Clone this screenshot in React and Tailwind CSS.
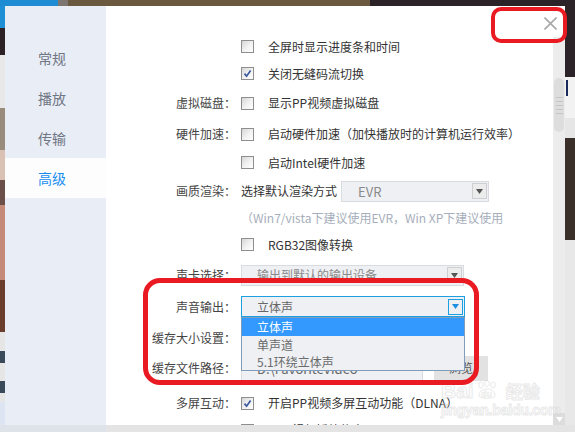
import React from "react";

// small checkbox like the old PPTV settings dialog
function Check({ on }) {
  return (
    <span className="w-[13px] h-[13px] shrink-0 border border-[#8e8e8e] bg-linear-to-br from-[#d6d6d6] via-[#f1f1f1] to-white flex items-center justify-center">
      {on && (
        <svg width="9" height="9" viewBox="0 0 9 9">
          <path d="M1.5 4.6 L3.6 7.2 L7.6 1.4" fill="none" stroke="#3a5a9f" strokeWidth="1.7" />
        </svg>
      )}
    </span>
  );
}

function Arrow({ active }) {
  return (
    <span
      className={`w-[15px] h-[16px] flex items-center justify-center border ${
        active ? "border-[#1ca0e2] bg-[#eef0f4]" : "border-[#cdcfd3] bg-[#ececec]"
      }`}
    >
      <svg width="7" height="5" viewBox="0 0 7 5">
        <path d="M0 0 H7 L3.5 5 Z" fill={active ? "#1c8fe0" : "#555"} />
      </svg>
    </span>
  );
}

function Row({ h, label, children }) {
  return (
    <div className={`flex items-center shrink-0 ${h}`}>
      <div className="w-[130px] shrink-0 text-right text-[#444]">{label}</div>
      <div className="ml-[5px] flex items-center whitespace-nowrap">{children}</div>
    </div>
  );
}

export default function App() {
  return (
    <div className="relative w-[575px] h-[432px] overflow-hidden flex flex-col bg-[#e6e6e6] font-['Noto_Sans_CJK_SC',sans-serif] text-[12px] leading-none">
      {/* background strip on top */}
      <div className="h-[6px] flex shrink-0">
        <div className="w-[58px] bg-[#1d8cd4]" />
        <div className="w-[10px] bg-[#7c7570]" />
        <div className="w-[302px] bg-[#6a583f]" />
        <div className="flex-1 bg-[#2b2327]" />
      </div>

      <div className="h-[419px] flex shrink-0">
        {/* background on the left */}
        <div className="w-[5px] flex flex-col">
          <div className="h-[22px] bg-[#1f8fd6]" />
          <div className="h-[27px] bg-[#2c2226]" />
          <div className="h-[53px] bg-[#e8e8e8]" />
          <div className="h-[42px] bg-[#9a8c7c]" />
          <div className="h-[30px] bg-[#d9c2b4]" />
          <div className="h-[25px] bg-[#6a5048]" />
          <div className="h-[75px] bg-[#c58a78]" />
          <div className="h-[52px] bg-[#6b3d2c]" />
          <div className="h-[19px] bg-[#e6e6e6]" />
          <div className="h-[12px] bg-[#3b4a5a]" />
          <div className="h-[18px] bg-[#e6e6e6]" />
          <div className="h-[12px] bg-[#3b4a5a]" />
          <div className="h-[9px] bg-[#e6e6e6]" />
          <div className="h-[23px] bg-[#dce5f1]" />
        </div>

        {/* dialog */}
        <div className="relative flex">
          <div className="w-[101px] bg-[#e9edf5] pt-[32px] flex flex-col text-[14px] text-[#6f7684]">
            <div className="h-[40px] flex items-center pl-[33px]">常规</div>
            <div className="h-[40px] flex items-center pl-[33px]">播放</div>
            <div className="h-[40px] flex items-center pl-[33px]">传输</div>
            <div className="h-[40px] flex items-center pl-[33px] bg-[#fdfdfe] text-[#1a8ef0]">高级</div>
          </div>

          <div className="w-[447px] bg-white overflow-hidden pt-[27px] flex flex-col text-[#333]">
            <Row h="h-[27px]">
              <Check />
              <span className="ml-[14px]">全屏时显示进度条和时间</span>
            </Row>
            <Row h="h-[27px]">
              <Check on />
              <span className="ml-[14px]">关闭无缝码流切换</span>
            </Row>
            <Row h="h-[32px]" label="虚拟磁盘：">
              <Check />
              <span className="ml-[14px]">显示PP视频虚拟磁盘</span>
            </Row>
            <Row h="h-[30px]" label="硬件加速：">
              <Check />
              <span className="ml-[14px]">启动硬件加速（加快播放时的计算机运行效率）</span>
            </Row>
            <Row h="h-[27px]">
              <Check />
              <span className="ml-[14px]">启动Intel硬件加速</span>
            </Row>
            <Row h="h-[30px]" label="画质渲染：">
              <span>选择默认渲染方式</span>
              <div className="ml-[4px] w-[148px] h-[21px] bg-[#eef0f4] border border-[#d8dbe0] flex items-center justify-between pl-[16px] pr-[1px]">
                <span className="text-[#8a8a8a] text-[13px]">EVR</span>
                <Arrow />
              </div>
            </Row>
            <Row h="h-[24px]">
              <span className="text-[#a6aebb]">（Win7/vista下建议使用EVR，Win XP下建议使用</span>
            </Row>
            <Row h="h-[29px]">
              <Check />
              <span className="ml-[14px]">RGB32图像转换</span>
            </Row>
            <Row h="h-[32px]" label="声卡选择：">
              <div className="w-[223px] h-[21px] bg-[#eef0f4] border border-[#d8dbe0] flex items-center justify-between pl-[15px] pr-[1px]">
                <span className="text-[#8a8a8a]">输出到默认的输出设备</span>
                <Arrow />
              </div>
            </Row>
            <Row h="h-[31px]" label="声音输出：">
              <div className="w-[224px] h-[21px] bg-[#eef0f4] border border-[#1ca0e2] flex items-center justify-between pl-[15px] pr-[1px]">
                <span className="text-[#666]">立体声</span>
                <Arrow active />
              </div>
            </Row>
            <Row h="h-[31px]" label="缓存大小设置：">
              <div className="w-[180px] h-[21px] bg-[#eef0f4] border border-[#d8dbe0]" />
            </Row>
            <Row h="h-[30px]" label="缓存文件路径：">
              <div className="w-[182px] h-[25px] bg-[#eef0f4] border border-[#d8dbe0] flex items-center pl-[15px] text-[#666] text-[13px]">
                D:\FavoriteVideo
              </div>
              <div className="ml-[11px] w-[54px] h-[25px] bg-[#e2e2e2] flex items-center justify-center text-[#555]">浏览</div>
            </Row>
            <Row h="h-[40px]" label="多屏互动：">
              <Check on />
              <span className="ml-[14px]">开启PP视频多屏互动功能（DLNA）</span>
            </Row>
            <div className="h-[20px] flex items-start pt-[1px] shrink-0">
              <div className="w-[130px] shrink-0" />
              <div className="ml-[5px] flex items-start">
                <Check />
                <span className="ml-[14px]">显示视频播放信息</span>
              </div>
            </div>
          </div>

          {/* scrollbar */}
          <div className="w-[12px] flex flex-col bg-white">
            <div className="h-[31px]" />
            <div className="flex-1 flex flex-col bg-[#ececec]">
              <div className="h-[41px]" />
              <div className="h-[54px] mx-[1px] rounded-[5px] bg-[#dddddd] flex flex-col items-center justify-center gap-[3px]">
                <div className="w-[7px] h-px bg-[#c4c4c4]" />
                <div className="w-[7px] h-px bg-[#c4c4c4]" />
                <div className="w-[7px] h-px bg-[#c4c4c4]" />
                <div className="w-[7px] h-px bg-[#c4c4c4]" />
                <div className="w-[7px] h-px bg-[#c4c4c4]" />
              </div>
              <div className="flex-1" />
              <div className="h-[12px] bg-[#dcdcdc] flex items-center justify-center">
                <svg width="7" height="5" viewBox="0 0 7 5">
                  <path d="M0 0 H7 L3.5 5 Z" fill="#fff" />
                </svg>
              </div>
            </div>
          </div>

          {/* close button */}
          <svg className="absolute left-[539px] top-[11px]" width="13" height="13" viewBox="0 0 13 13">
            <path d="M0.5 0.5 L12.5 12.5 M12.5 0.5 L0.5 12.5" stroke="#a8a8a8" strokeWidth="1.6" />
          </svg>
        </div>

        {/* background on the right */}
        <div className="w-[10px] flex flex-col">
          <div className="h-[71px] bg-[#2b2327]" />
          <div className="h-[41px] bg-[#f2f2f2] pl-[1px] pt-[3px]">
            <div className="w-[2px] h-[16px] bg-[#1a2a5a]" />
          </div>
          <div className="h-[20px] bg-[#e6e6e6]" />
          <div className="h-[102px] bg-[#3a2f29]" />
          <div className="flex-1 bg-[#e8e8e8]" />
        </div>
      </div>

      {/* bottom strip */}
      <div className="h-[7px] flex shrink-0">
        <div className="w-[106px] bg-[#dee3ea]" />
        <div className="flex-1 bg-[#e4e4e4]" />
      </div>

      {/* dropdown list of 声音输出 */}
      <div className="absolute left-[241px] top-[317px] w-[224px] border border-[#7f9dbb] bg-[#eef0f4] flex flex-col text-[#6a6a6a]">
        <div className="h-[18px] bg-[#3399ff] text-white flex items-center pl-[15px]">立体声</div>
        <div className="h-[17px] flex items-center pl-[15px]">单声道</div>
        <div className="h-[17px] flex items-center pl-[15px]">5.1环绕立体声</div>
      </div>

      {/* baidu watermark */}
      <div className="absolute left-[441px] top-[380px] flex flex-col items-start opacity-50 text-white [-webkit-text-stroke:1px_#d4d4d4] font-['Liberation_Sans',sans-serif]">
        <div className="flex items-center h-[20px]">
          <span className="text-[21px] font-bold">Bai</span>
          <svg width="24" height="20" viewBox="0 0 24 20" className="ml-[1px]">
            <g fill="none" stroke="#d4d4d4" strokeWidth="1">
              <ellipse cx="6" cy="5" rx="2.3" ry="3" />
              <ellipse cx="12" cy="3.5" rx="2.3" ry="3" />
              <ellipse cx="18" cy="5" rx="2.3" ry="3" />
              <path d="M4 16 C4 10 9 9 12 9 C15 9 20 10 20 16 C20 19 4 19 4 16 Z" />
            </g>
            <text x="6" y="17" fontSize="9" fontWeight="bold" fill="#fff" stroke="#d4d4d4" strokeWidth="0.6">du</text>
          </svg>
          <span className="ml-[7px] text-[17px] font-bold font-['Noto_Sans_CJK_SC',sans-serif]">经验</span>
        </div>
        <span className="mt-[3px] text-[14px] font-bold tracking-[-0.2px]">jingyan.baidu.com</span>
      </div>

      {/* red marks */}
      <div className="absolute left-[491px] top-[7px] w-[76px] h-[36px] border-4 border-[#ea1a22] rounded-[10px]" />
      <div className="absolute left-[143px] top-[278px] w-[336px] h-[107px] border-[5px] border-[#ea1a22] rounded-[17px]" />
    </div>
  );
}
